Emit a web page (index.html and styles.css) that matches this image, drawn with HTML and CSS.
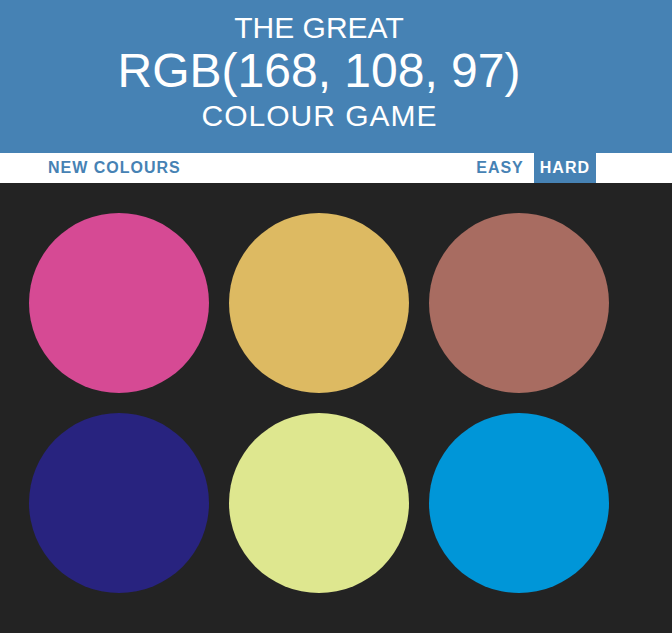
FILE: index.html
```html
<!DOCTYPE html>
<html lang="en">
<head>
<meta charset="utf-8">
<title>The Great RGB Colour Game</title>
<link rel="stylesheet" href="styles.css">
</head>
<body>
<header class="header">
  <div class="frame">
    <h1 class="title">
      <span class="title-line">The Great</span>
      <span class="title-rgb">RGB(168, 108, 97)</span>
      <span class="title-last">Colour Game</span>
    </h1>
  </div>
</header>
<nav class="stripe">
  <div class="frame stripe-inner">
    <button class="btn">New Colours</button>
    <div class="modes">
      <button class="btn">Easy</button>
      <button class="btn btn-selected">Hard</button>
    </div>
  </div>
</nav>
<main class="board">
  <div class="grid">
    <div class="square c1"></div>
    <div class="square c2"></div>
    <div class="square c3"></div>
    <div class="square c4"></div>
    <div class="square c5"></div>
    <div class="square c6"></div>
  </div>
</main>
</body>
</html>
```
FILE: styles.css
```css
html, body {
  margin: 0;
  padding: 0;
}

body {
  background: #232323;
  font-family: "Liberation Sans", Arial, sans-serif;
  height: 633px;
  overflow: hidden;
}

.frame {
  width: 638px;
}

.header {
  background: #4682b4;
  height: 153px;
  box-sizing: border-box;
  padding-top: 11px;
}

.title {
  margin: 0;
  color: #ffffff;
  font-weight: normal;
  text-transform: uppercase;
  text-align: center;
}

.title-line {
  display: block;
  font-size: 30px;
  line-height: 33px;
}

.title-rgb {
  display: block;
  font-size: 48px;
  line-height: 54px;
}

.title-last {
  display: block;
  font-size: 30px;
  line-height: 36px;
  letter-spacing: 1px;
  padding-left: 1px;
}

.stripe {
  background: #ffffff;
  height: 30px;
}

.stripe-inner {
  box-sizing: border-box;
  height: 30px;
  padding: 0 42px;
  display: flex;
  justify-content: space-between;
}

.modes {
  display: flex;
  gap: 4px;
}

.btn {
  border: none;
  background: none;
  margin: 0;
  padding: 0 6px;
  height: 30px;
  font-family: "Liberation Sans", Arial, sans-serif;
  font-size: 16px;
  font-weight: 700;
  letter-spacing: 1px;
  text-transform: uppercase;
  color: #4682b4;
  cursor: pointer;
}

.btn-selected {
  background: #4682b4;
  color: #ffffff;
}

.board {
  padding-top: 20px;
}

.grid {
  width: 600px;
  margin-left: 19px;
  display: grid;
  grid-template-columns: repeat(3, 180px);
  gap: 20px;
  padding: 10px;
  box-sizing: border-box;
}

.square {
  width: 180px;
  height: 180px;
  border-radius: 50%;
}

.c1 { background: #d64a94; }
.c2 { background: #ddba62; }
.c3 { background: #a86c61; }
.c4 { background: #28237f; }
.c5 { background: #dee78f; }
.c6 { background: #0096d8; }
```
